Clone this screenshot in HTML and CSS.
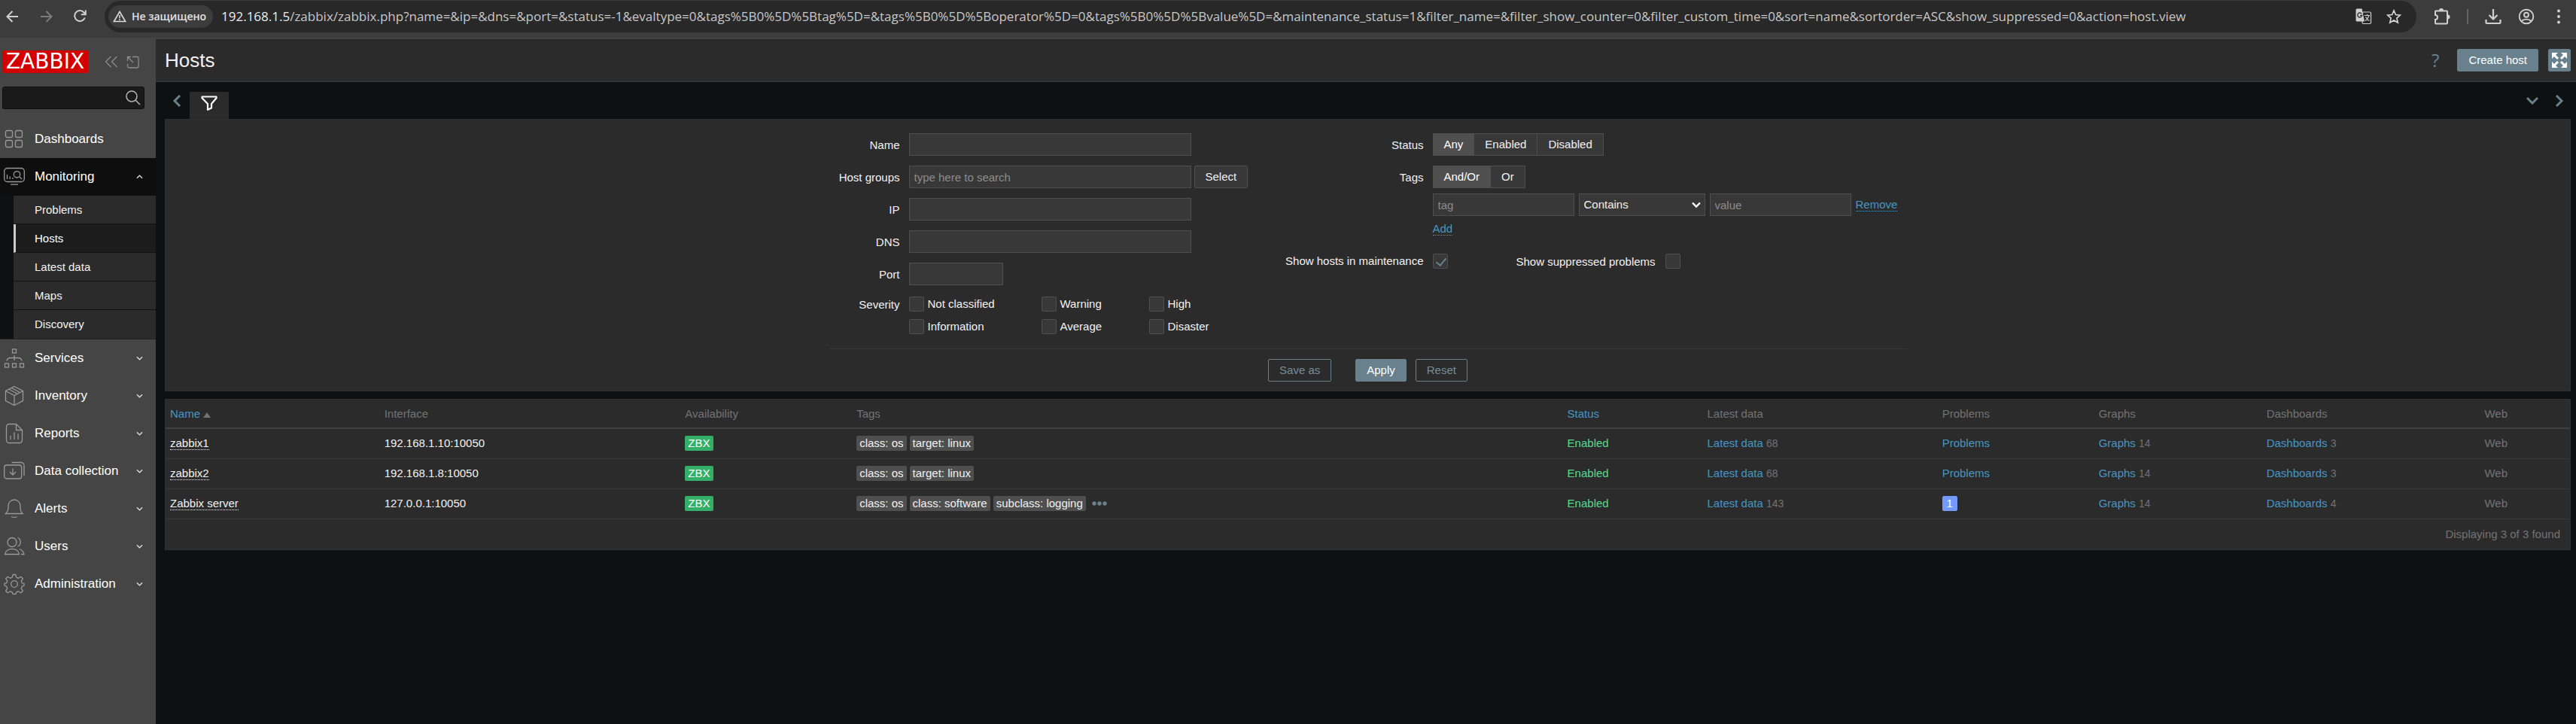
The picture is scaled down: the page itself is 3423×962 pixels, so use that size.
FILE: index.html
```html
<!DOCTYPE html>
<html lang="en">
<head>
<meta charset="utf-8">
<title>Zabbix: Hosts</title>
<link rel="stylesheet" href="styles.css">
</head>
<body>
<div class="browser">
  <div class="browser-nav">
    <button class="icon-btn" aria-label="Back"><svg width="17" height="16" viewBox="0 0 17 16" fill="none" stroke="#d0d0d0" stroke-width="2"><path d="M16 8H2M8.500 1L1.500 8l7 7"/></svg></button>
    <button class="icon-btn" aria-label="Forward"><svg width="17" height="16" viewBox="0 0 17 16" fill="none" stroke="#7c7c7c" stroke-width="2"><path d="M1 8h14M8.500 1l7 7-7 7"/></svg></button>
    <button class="icon-btn" aria-label="Reload"><svg width="17" height="17" viewBox="0 0 17 17" fill="none" stroke="#d0d0d0" stroke-width="2"><path d="M14.800 10.500A7 7 0 1 1 13.500 3.500L15.500 5.500M15.800 .5v5.800h-6"/></svg></button>
  </div>
  <div class="address">
    <button class="chip"><svg width="18" height="16" viewBox="0 0 18 16" fill="none" stroke="#dcdcdc" stroke-width="1.600"><path d="M9 1.500L16.600 14.500H1.400z"/><path d="M9 6v4.300M9 11.300v1.700"/></svg>Не защищено</button>
    <div class="url"><span class="url-host">192.168.1.5</span>/zabbix/zabbix.php?name=&amp;ip=&amp;dns=&amp;port=&amp;status=-1&amp;evaltype=0&amp;tags%5B0%5D%5Btag%5D=&amp;tags%5B0%5D%5Boperator%5D=0&amp;tags%5B0%5D%5Bvalue%5D=&amp;maintenance_status=1&amp;filter_name=&amp;filter_show_counter=0&amp;filter_custom_time=0&amp;sort=name&amp;sortorder=ASC&amp;show_suppressed=0&amp;action=host.view</div>
    <button class="icon-btn" aria-label="Translate"><svg width="22" height="22" viewBox="0 0 22 22"><rect x="9" y="5" width="11.500" height="15.500" rx="1.500" fill="none" stroke="#cfcfcf" stroke-width="1.200"/><path d="M2 .5h6.500l3.500 17H2a1.500 1.500 0 0 1-1.500-1.500V2A1.500 1.500 0 0 1 2 .5z" fill="#cfcfcf"/><path d="M8.200 7.300A3 3 0 1 0 8.700 9.500H6" fill="none" stroke="#333" stroke-width="1.400"/><path d="M12 9.500h7M15.500 8v1.500M18 9.500c-1 3.500-3 5.500-5 7M13.500 11.500c1 2 3 4 5 5" fill="none" stroke="#cfcfcf" stroke-width="1.200"/></svg></button>
    <button class="icon-btn" aria-label="Bookmark"><svg width="20" height="20" viewBox="0 0 20 20" fill="none" stroke="#d6d6d6" stroke-width="1.700"><path d="M10 2l2.400 5.500 6 .6-4.500 4 1.300 5.900L10 14.900 4.800 18l1.300-5.900-4.500-4 6-.6z"/></svg></button>
  </div>
  <div class="browser-tools">
    <button class="icon-btn" aria-label="Extensions"><svg width="22" height="22" viewBox="0 0 22 22" fill="none" stroke="#d0d0d0" stroke-width="2"><path d="M2.500 3.500h14.500a1 1 0 0 1 1 1v15a1 1 0 0 1-1 1H3a1 1 0 0 1-1-1v-4.500a3 3 0 0 0 0-6V4.500z"/><path d="M8 3a2 2 0 0 1 4 0M18.500 9.500a2 2 0 0 1 0 4" fill="#d0d0d0"/></svg></button>
    <span class="tool-sep"></span>
    <button class="icon-btn" aria-label="Downloads"><svg width="22" height="22" viewBox="0 0 22 22" fill="none" stroke="#d0d0d0" stroke-width="2.200"><path d="M11 1v13.500M5.500 9l5.500 5.500L16.500 9M1.500 15v4a1 1 0 0 0 1 1h17a1 1 0 0 0 1-1v-4"/></svg></button>
    <button class="icon-btn" aria-label="Profile"><svg width="22" height="22" viewBox="0 0 22 22" fill="none" stroke="#d0d0d0" stroke-width="1.900"><circle cx="11" cy="11" r="9.300"/><circle cx="11" cy="8.800" r="3"/><path d="M4.500 17c3.500-3.200 9.500-3.200 13 0"/></svg></button>
    <button class="icon-btn" aria-label="Menu"><svg width="20" height="20" viewBox="0 0 20 20" fill="#d0d0d0"><circle cx="10" cy="2.500" r="2"/><circle cx="10" cy="10" r="2"/><circle cx="10" cy="17.500" r="2"/></svg></button>
  </div>
</div>
<div class="app">
  <aside class="sidebar">
    <div class="brand">
      <a class="logo" href="#">ZABBIX</a>
      <button class="icon-btn" aria-label="Collapse sidebar"><svg width="18" height="16" viewBox="0 0 18 16" fill="none" stroke="#8d8d8d" stroke-width="1.300"><path d="M8.500 1L1.500 8l7 7M16.500 1l-7 7 7 7"/></svg></button>
      <button class="icon-btn" aria-label="Hide sidebar"><svg width="18" height="17" viewBox="0 0 18 17" fill="none" stroke="#8d8d8d" stroke-width="1.300"><path d="M8 1.500H14A2 2 0 0 1 16 3.500v10.500a2 2 0 0 1-2 2H3.500a2 2 0 0 1-2-2V11M1.500 7V1.500H6M1.500 1.500l7.500 7.500"/></svg></button>
    </div>
    <div class="search">
      <input type="text" aria-label="Search">
      <button class="icon-btn" aria-label="Search"><svg width="20" height="20" viewBox="0 0 20 20" fill="none" stroke="#b8b8b8" stroke-width="1.500"><circle cx="8" cy="8" r="7"/><path d="M13 13l6 6"/></svg></button>
    </div>
    <nav class="menu">
      <a class="item" href="#"><svg class="mi" viewBox="0 0 28 28"><rect x="2.500" y="2.500" width="9" height="9" rx="2"/><rect x="15.500" y="2.500" width="9" height="9" rx="2"/><rect x="2.500" y="15.500" width="9" height="9" rx="2"/><rect x="15.500" y="15.500" width="9" height="9" rx="2"/></svg><span>Dashboards</span></a>
      <a class="item open" href="#"><svg class="mi" viewBox="0 0 28 28"><rect x=".7" y="2.500" width="26.600" height="18" rx="4"/><path d="M9 24.200h10M4.500 11v6M8.200 13.500V17M12 15v2M21 14l3 3"/><circle cx="17.500" cy="10.800" r="4.200"/></svg><span>Monitoring</span><svg class="chev" viewBox="0 0 10 6"><path d="M1 5l4-4 4 4"/></svg></a>
      <div class="submenu">
        <a href="#">Problems</a>
        <a class="current" href="#">Hosts</a>
        <a href="#">Latest data</a>
        <a href="#">Maps</a>
        <a href="#">Discovery</a>
      </div>
      <a class="item" href="#"><svg class="mi" viewBox="0 0 28 28"><rect x="11.500" y="2" width="5" height="5"/><rect x="1.500" y="21" width="5" height="5"/><rect x="11.500" y="21" width="5" height="5"/><rect x="21.500" y="21" width="5" height="5"/><path d="M14 10v7M4 17.500c.5-3 2-4 5-4h10c3 0 4.500 1 5 4"/></svg><span>Services</span><svg class="chev" viewBox="0 0 10 6"><path d="M1 1l4 4 4-4"/></svg></a>
      <a class="item" href="#"><svg class="mi" viewBox="0 0 28 28"><path d="M14 1.500l11.500 6v13L14 26.500l-11.500-6v-13zM2.500 7.500L14 13.500l11.500-6M14 13.500v13M10.500 3.500L21.500 9.500M7 5.300l11 6"/></svg><span>Inventory</span><svg class="chev" viewBox="0 0 10 6"><path d="M1 1l4 4 4-4"/></svg></a>
      <a class="item" href="#"><svg class="mi" viewBox="0 0 28 28"><path d="M16.500 1.500H7a3.500 3.500 0 0 0-3.500 3.500v18A3.500 3.500 0 0 0 7 26.500h14a3.500 3.500 0 0 0 3.500-3.500V9.500zM16.500 1.500v8h8M9 17v5M14 12.500V22M19 14.500V22"/></svg><span>Reports</span><svg class="chev" viewBox="0 0 10 6"><path d="M1 1l4 4 4-4"/></svg></a>
      <a class="item" href="#"><svg class="mi" viewBox="0 0 28 28"><rect x=".7" y="6" width="23" height="18" rx="3"/><path d="M10.500 2.500H23a4 4 0 0 1 4 4V20M12 10.500v8.500M8 15l4 4 4-4"/></svg><span>Data collection</span><svg class="chev" viewBox="0 0 10 6"><path d="M1 1l4 4 4-4"/></svg></a>
      <a class="item" href="#"><svg class="mi" viewBox="0 0 28 28"><path d="M2.500 20.500c2-2 3.500-4 3.500-7V10a8 8 0 0 1 16 0v3.500c0 3 1 5 3 7zM10 24.500q4 1.800 8 0"/></svg><span>Alerts</span><svg class="chev" viewBox="0 0 10 6"><path d="M1 1l4 4 4-4"/></svg></a>
      <a class="item" href="#"><svg class="mi" viewBox="0 0 28 28"><circle cx="11" cy="8.500" r="6"/><path d="M1.500 24.500c2-9.500 17.500-9.500 19 0zM18.500 2.500c5 2 5 9.500 0 11.500M21 17.500c3 1.500 5.500 3.500 6 7h-4"/></svg><span>Users</span><svg class="chev" viewBox="0 0 10 6"><path d="M1 1l4 4 4-4"/></svg></a>
      <a class="item" href="#"><svg class="mi" viewBox="0 0 28 28"><circle cx="14" cy="14" r="4.300"/><path stroke-linejoin="round" d="M12.200 1.500h3.600l1 3.700 2.600 1.100 3.400-2 2.500 2.500-2 3.400 1.100 2.600 2.600.4v2.800l-2.600 1.200-1.100 2.600 2 3.400-2.500 2.500-3.400-2-2.600 1.100-1 2.700h-3.600l-1-2.700-2.600-1.100-3.400 2-2.500-2.500 2-3.400-1.100-2.600L1 16v-2.800l2.600-.4 1.100-2.600-2-3.400 2.500-2.500 3.400 2 2.600-1.100z"/></svg><span>Administration</span><svg class="chev" viewBox="0 0 10 6"><path d="M1 1l4 4 4-4"/></svg></a>
    </nav>
  </aside>
  <main class="main">
    <header class="page-head">
      <h1>Hosts</h1>
      <a class="help" href="#" aria-label="Help">?</a>
      <button class="btn primary">Create host</button>
      <button class="btn primary kiosk" aria-label="Kiosk mode"><svg width="20" height="20" viewBox="0 0 20 20" fill="#fff" stroke="#fff" stroke-width="3"><path d="M0 0h8L0 8zM20 0v8L12 0zM0 20v-8l8 8zM20 20h-8l8-8z" stroke="none"/><path d="M3 3l5 5M17 3l-5 5M3 17l5-5M17 17l-5-5"/></svg></button>
    </header>
    <div class="tabs">
      <button class="icon-btn tab-prev" aria-label="Previous tab"><svg width="12" height="16" viewBox="0 0 12 16" fill="none" stroke="#69808d" stroke-width="3"><path d="M10 1L3 8l7 7"/></svg></button>
      <button class="tab" aria-label="Filter"><svg width="22" height="20" viewBox="0 0 22 20" fill="none" stroke="#fff" stroke-width="2.200" stroke-linejoin="round"><path d="M1.500 1.500h19v1.700L14 11v5.500L9 18.800V11L1.500 3.200z"/></svg></button>
      <span class="grow"></span>
      <button class="icon-btn" aria-label="Tab list"><svg width="16" height="11" viewBox="0 0 16 11" fill="none" stroke="#69808d" stroke-width="3"><path d="M1 2l7 7 7-7"/></svg></button>
      <button class="icon-btn" aria-label="Next tab"><svg width="12" height="16" viewBox="0 0 12 16" fill="none" stroke="#69808d" stroke-width="3"><path d="M2 1l7 7-7 7"/></svg></button>
    </div>
    <form class="filter">
      <div class="filter-cols">
        <div class="fields left">
          <label for="f-name">Name</label><div><input class="text wide" id="f-name" type="text"></div>
          <label for="f-groups">Host groups</label><div class="row near"><input class="text wide" id="f-groups" type="text" placeholder="type here to search"><button class="btn plain" type="button">Select</button></div>
          <label for="f-ip">IP</label><div><input class="text wide" id="f-ip" type="text"></div>
          <label for="f-dns">DNS</label><div><input class="text wide" id="f-dns" type="text"></div>
          <label for="f-port">Port</label><div><input class="text port" id="f-port" type="text"></div>
          <span class="label sev-label">Severity</span>
          <div class="severity">
            <label><input type="checkbox">Not classified</label><label><input type="checkbox">Warning</label><label><input type="checkbox">High</label>
            <label><input type="checkbox">Information</label><label><input type="checkbox">Average</label><label><input type="checkbox">Disaster</label>
          </div>
        </div>
        <div class="fields right">
          <span class="label">Status</span>
          <div class="seg"><label><input type="radio" name="status" checked><span>Any</span></label><label><input type="radio" name="status"><span>Enabled</span></label><label><input type="radio" name="status"><span>Disabled</span></label></div>
          <span class="label">Tags</span>
          <div class="tags-field">
            <div class="seg"><label><input type="radio" name="evaltype" checked><span>And/Or</span></label><label><input type="radio" name="evaltype"><span>Or</span></label></div>
            <div class="row tag-row"><input class="text tag-in" type="text" placeholder="tag" aria-label="Tag"><span class="select"><select aria-label="Operator"><option>Contains</option></select><svg width="12" height="9" viewBox="0 0 12 9" fill="none" stroke="#fff" stroke-width="2.400"><path d="M1 1.500l5 5 5-5"/></svg></span><input class="text tag-in" type="text" placeholder="value" aria-label="Value"><a class="dotted" href="#">Remove</a></div>
            <a class="dotted add" href="#">Add</a>
          </div>
          <label for="f-maint">Show hosts in maintenance</label>
          <div class="row maint"><input id="f-maint" type="checkbox" checked><label for="f-supp">Show suppressed problems</label><input id="f-supp" type="checkbox"></div>
        </div>
      </div>
      <div class="filter-actions"><button class="btn outline save" type="button">Save as</button><button class="btn primary" type="button">Apply</button><button class="btn outline" type="button">Reset</button></div>
    </form>
    <section class="list">
      <table>
        <colgroup><col class="c-name"><col class="c-if"><col class="c-av"><col class="c-tags"><col class="c-st"><col class="c-ld"><col class="c-pr"><col class="c-gr"><col class="c-db"><col></colgroup>
        <thead><tr><th><a href="#">Name<span class="sort"></span></a></th><th>Interface</th><th>Availability</th><th>Tags</th><th><a href="#">Status</a></th><th>Latest data</th><th>Problems</th><th>Graphs</th><th>Dashboards</th><th>Web</th></tr></thead>
        <tbody>
          <tr><td><a class="host" href="#">zabbix1</a></td><td>192.168.1.10:10050</td><td><span class="badge zbx">ZBX</span></td><td><span class="tags"><span class="badge">class: os</span><span class="badge">target: linux</span></span></td><td><a class="ok" href="#">Enabled</a></td><td><a href="#">Latest data</a> <sup>68</sup></td><td><a href="#">Problems</a></td><td><a href="#">Graphs</a> <sup>14</sup></td><td><a href="#">Dashboards</a> <sup>3</sup></td><td class="off">Web</td></tr>
          <tr><td><a class="host" href="#">zabbix2</a></td><td>192.168.1.8:10050</td><td><span class="badge zbx">ZBX</span></td><td><span class="tags"><span class="badge">class: os</span><span class="badge">target: linux</span></span></td><td><a class="ok" href="#">Enabled</a></td><td><a href="#">Latest data</a> <sup>68</sup></td><td><a href="#">Problems</a></td><td><a href="#">Graphs</a> <sup>14</sup></td><td><a href="#">Dashboards</a> <sup>3</sup></td><td class="off">Web</td></tr>
          <tr><td><a class="host" href="#">Zabbix server</a></td><td>127.0.0.1:10050</td><td><span class="badge zbx">ZBX</span></td><td><span class="tags"><span class="badge">class: os</span><span class="badge">class: software</span><span class="badge">subclass: logging</span><button class="icon-btn" aria-label="More tags"><svg width="20" height="6" viewBox="0 0 20 6" fill="#69808d"><circle cx="3" cy="3" r="2.700"/><circle cx="10" cy="3" r="2.700"/><circle cx="17" cy="3" r="2.700"/></svg></button></span></td><td><a class="ok" href="#">Enabled</a></td><td><a href="#">Latest data</a> <sup>143</sup></td><td><a class="badge info" href="#">1</a></td><td><a href="#">Graphs</a> <sup>14</sup></td><td><a href="#">Dashboards</a> <sup>4</sup></td><td class="off">Web</td></tr>
        </tbody>
      </table>
      <div class="list-foot">Displaying 3 of 3 found</div>
    </section>
  </main>
</div>
</body>
</html>
```
FILE: styles.css
```css
* { box-sizing: border-box; }
body {
  margin: 0;
  min-height: 100vh;
  display: flex;
  flex-direction: column;
  background: #0e1012;
  color: #f2f2f2;
  font: 15px/18px "Liberation Sans", Arial, sans-serif;
}
a { color: #4796c4; text-decoration: none; }
button, input, select { font: inherit; color: inherit; }
svg { display: block; flex: none; }
.icon-btn { display: flex; padding: 0; border: 0; background: none; }
.grow { flex: 1; }
.row { display: flex; align-items: center; }

/* Browser toolbar */
.browser {
  display: flex;
  align-items: center;
  height: 52px;
  padding: 1px 13px 8px 8px;
  background: #3c3c3c;
  border-bottom: 2px solid #454545;
}
.browser-nav { display: flex; align-items: center; gap: 28px; width: 131px; }
.address {
  flex: 1;
  min-width: 0;
  height: 42px;
  display: flex;
  align-items: center;
  padding: 0 20px 0 5px;
  border-radius: 21px;
  background: #282828;
}
.chip {
  display: flex;
  align-items: center;
  gap: 7px;
  width: 139px;
  height: 30px;
  padding: 0 6px;
  border: 0;
  border-radius: 15px;
  background: #3c3c3c;
  color: #e3e3e3;
  font: 600 14px/20px "Open Sans", sans-serif;
  white-space: nowrap;
}
.url {
  flex: 1;
  min-width: 0;
  margin-left: 11px;
  overflow: hidden;
  white-space: nowrap;
  color: #c7c7c7;
  font: 17px/24px "Open Sans", sans-serif;
}
.url-host { color: #ececec; }
.address .icon-btn { margin-left: 19px; }
.browser-tools { display: flex; align-items: center; gap: 22px; padding-left: 23px; }
.tool-sep { width: 2px; height: 20px; background: #636363; }

/* Sidebar */
.app { flex: 1; display: flex; }
.sidebar { flex: none; width: 207px; background: #454545; }
.brand { display: flex; align-items: center; gap: 11px; padding: 15px 3px 0; }
.logo {
  width: 114px;
  margin-right: 11px;
  background: #d40000;
  color: #fff;
  font: 28px/30px "DejaVu Sans", sans-serif;
  text-align: center;
}
.search {
  display: flex;
  align-items: center;
  height: 30px;
  margin: 18px 15px 15px 3px;
  padding-right: 4px;
  background: #1a1a1a;
  border: 1px solid #0e0e0e;
  border-radius: 3px;
}
.search input { flex: 1; min-width: 0; border: 0; background: none; }
.item {
  display: flex;
  align-items: center;
  height: 50px;
  padding: 0 17px 0 5px;
  color: #fff;
  font-size: 17px;
}
.item span { flex: 1; margin-left: 13px; }
.mi { width: 28px; height: 28px; fill: none; stroke: #999; stroke-width: 1.300; }
.chev { width: 9px; height: 6px; fill: none; stroke: #ddd; stroke-width: 1.500; }
.open { background: #0e0e0e; }
.submenu { padding-left: 18px; background: #0e1012; border-bottom: 1px solid #222; }
.submenu a {
  display: block;
  padding: 10px 28px 9px;
  line-height: 18px;
  background: #2b2b2b;
  border-bottom: 1px solid #111;
  color: #f2f2f2;
}
.submenu .current { padding-left: 25px; border-left: 3px solid #ccc; background: #1c1c1c; color: #fff; }
.submenu a:last-child { border-bottom: 0; padding-bottom: 10px; }

/* Page header and filter tabs */
.main { flex: 1; min-width: 0; }
.page-head {
  display: flex;
  align-items: center;
  height: 57px;
  padding: 0 7px 0 12px;
  background: #2b2b2b;
  border-bottom: 1px solid #383838;
}
h1 { flex: 1; margin: 0; font-size: 26px; line-height: 30px; font-weight: 400; }
.help { margin-right: 24px; color: #69808d; font: 24px/30px "Open Sans", sans-serif; }
.btn {
  height: 30px;
  padding: 0 14px;
  border: 1px solid #4f4f4f;
  border-radius: 2px;
  background: #383838;
}
.primary { border-color: #69808d; background: #69808d; color: #fff; }
.outline { border-color: #69808d; background: none; color: #768d99; }
.kiosk { width: 30px; margin-left: 13px; padding: 0 4px; }
.tabs { display: flex; align-items: center; gap: 22px; height: 49px; padding: 0 16px 0 22px; }
.tab-prev { margin-right: -11px; }
.tab {
  display: flex;
  justify-content: center;
  align-self: flex-end;
  width: 52px;
  height: 36px;
  padding: 5px 0 0;
  border: 0;
  border-radius: 2px 2px 0 0;
  background: #2b2b2b;
}

/* Filter */
.filter, .list { margin: 0 7px 10px 12px; background: #2b2b2b; border: 1px solid #303030; }
.filter { padding: 18px 20px 12px; }
.filter-cols, .filter-actions { max-width: 1432px; margin: 0 auto; }
.filter-cols { display: flex; }
.fields { display: grid; align-content: start; gap: 13px 12px; }
.fields > label, .label { padding-top: 7px; text-align: right; }
.left { flex: 0 1 559px; grid-template-columns: 94px 1fr; }
.right { flex: 1; grid-template-columns: 231px 1fr; }
.text {
  display: block;
  height: 30px;
  padding: 0 6px;
  border: 1px solid #4f4f4f;
  border-radius: 0;
  background: #383838;
}
.text::placeholder { color: #8c8c8c; opacity: 1; }
.wide { width: 375px; }
.port { width: 125px; }
.near { gap: 4px; }
.fields .sev-label { padding-top: 4px; }
.severity {
  display: grid;
  grid-template-columns: 176px 143px 1fr;
  row-gap: 10px;
  padding: 2px 0 19px;
}
.severity label { display: flex; align-items: center; gap: 5px; height: 20px; white-space: nowrap; }
input[type="checkbox"] {
  appearance: none;
  position: relative;
  flex: none;
  width: 20px;
  height: 20px;
  margin: 0;
  border: 1px solid #4f4f4f;
  border-radius: 2px;
  background: #383838;
}
input[type="checkbox"]:checked::after {
  content: "";
  position: absolute;
  left: 6px;
  top: 2px;
  width: 6px;
  height: 11px;
  border: solid #69808d;
  border-width: 0 2px 2px 0;
  transform: rotate(40deg);
}
.seg { display: flex; }
.seg label { position: relative; margin-right: -1px; }
.seg input { position: absolute; inset: 0; margin: 0; opacity: 0; }
.seg span { display: block; padding: 5px 14px; border: 1px solid #4f4f4f; background: #383838; line-height: 18px; }
.seg input:checked + span { background: #4f4f4f; color: #fff; }
.tag-row { gap: 6px; margin: 7px 0 8px; }
.tag-in { width: 188px; }
.select { position: relative; width: 168px; }
.select select {
  appearance: none;
  width: 100%;
  height: 30px;
  display: block;
  padding: 0 6px;
  border: 1px solid #4f4f4f;
  border-radius: 0;
  background: #383838;
}
.select svg { position: absolute; right: 6px; top: 11px; pointer-events: none; }
.dotted { border-bottom: 1px dotted #4796c4; line-height: 17px; }
.add { display: inline-block; }
.maint { align-items: flex-start; margin-top: 11px; }
.maint label { margin: 2px 13px 0 91px; }
.fields > label[for="f-maint"] { padding-top: 12px; }
.filter-actions { display: flex; justify-content: center; gap: 12px; padding-top: 13px; border-top: 1px solid #383838; }
.save { margin-right: 20px; }

/* Host list */
table { width: 100%; border-collapse: collapse; table-layout: fixed; }
.c-name { width: 8.91%; }
.c-if { width: 12.51%; }
.c-av { width: 7.13%; }
.c-tags { width: 29.56%; }
.c-st { width: 5.82%; }
.c-ld { width: 9.77%; }
.c-pr { width: 6.51%; }
.c-gr { width: 6.98%; }
.c-db { width: 9.07%; }
th, td { padding: 0 7px 0 6px; text-align: left; font-weight: 400; white-space: nowrap; }
th { height: 38px; color: #737373; border-bottom: 2px solid #404040; }
td { height: 40px; border-bottom: 1px solid #383838; }
.sort {
  display: inline-block;
  margin-left: 4px;
  border: solid transparent;
  border-width: 0 5px 7px;
  border-bottom-color: #737373;
}
.host { color: #f2f2f2; border-bottom: 1px dotted #f2f2f2; }
.ok { color: #59db8f; }
.off, sup { color: #737373; }
sup { font-size: 14px; line-height: 18px; vertical-align: baseline; }
.tags { display: flex; align-items: center; gap: 4px; }
.tags .icon-btn { margin-left: 4px; }
.badge { display: inline-block; padding: 0 4px; border-radius: 2px; background: #4f4f4f; line-height: 20px; }
.zbx { background: #34af67; color: #fff; }
.info { min-width: 20px; background: #7499ff; color: #fff; text-align: center; }
.list-foot { padding: 11px 13px; color: #737373; text-align: right; }
```
